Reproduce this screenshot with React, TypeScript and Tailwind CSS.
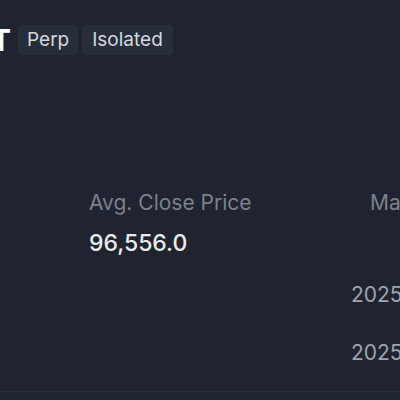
import React from 'react';

const App = () => {
  return (
    <div
      className="w-[400px] h-[400px] bg-[#1f2430] overflow-hidden flex flex-col"
      style={{ fontFamily: 'Inter, "Noto Sans", sans-serif' }}
    >
      {/* 상단 : 심볼, 뱃지 */}
      <div className="flex items-center gap-[4px] pt-[25px] -ml-[9px] h-[55px]">
        <span className="text-[30px] font-bold text-white leading-none mr-[3px]">T</span>
        <span className="h-[30px] px-[9px] rounded-[4px] bg-[#272d39] text-[#d5d8de] text-[19px] flex items-center">
          Perp
        </span>
        <span className="h-[30px] px-[10px] rounded-[4px] bg-[#272d39] text-[#d5d8de] text-[19px] flex items-center">
          Isolated
        </span>
      </div>

      {/* 중간 : 가격 */}
      <div className="flex pl-[89px] pt-[135px] whitespace-nowrap">
        <div className="w-[281px] shrink-0 flex flex-col gap-[13px]">
          <p className="text-[21px] leading-[26px] text-[#7c818c]">Avg. Close Price</p>
          <p className="text-[23px] leading-[28px] text-[#eaecef] font-medium">96,556.0</p>
        </div>
        <p className="text-[21px] leading-[26px] text-[#7c818c]">Margin Mode</p>
      </div>

      {/* 하단 : 시간 */}
      <div className="flex flex-col pl-[351px] pt-[25px] gap-[32px] whitespace-nowrap">
        <p className="text-[21px] leading-[26px] text-[#9ea3ac]">2025-01-03 12:00:00</p>
        <p className="text-[21px] leading-[26px] text-[#9ea3ac]">2025-01-03 11:00:00</p>
      </div>

      <div className="mt-auto h-[9px] border-t border-[#2a303c] bg-[#1f2530]" />
    </div>
  );
};

export default App;
